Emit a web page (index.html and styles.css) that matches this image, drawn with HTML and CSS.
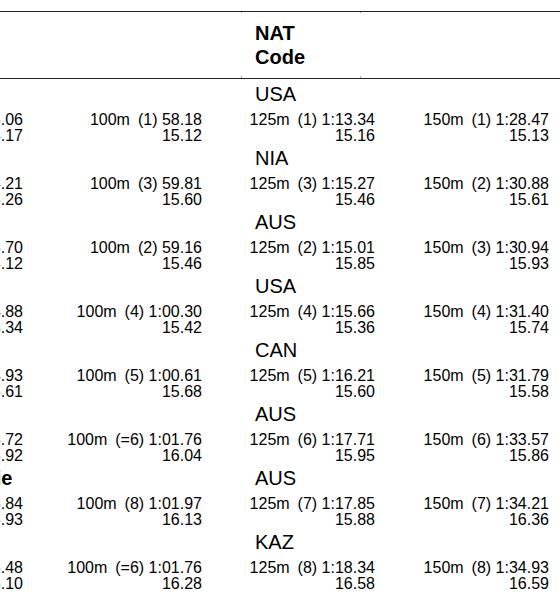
FILE: index.html
```html
<!DOCTYPE html>
<html lang="en">
<head>
<meta charset="utf-8">
<title>Splits</title>
<link rel="stylesheet" href="styles.css">
</head>
<body>
<div class="sheet">
  <div class="head">
    <div class="hcell hname">Name</div>
    <div class="hcell hnat">NAT<br>Code</div>
    <div class="hcell"></div>
  </div>

  <div class="group">
    <div class="crow"><div class="name">LEE Amy</div><div class="nat">USA</div></div>
    <div class="drow">
      <div class="cell"><div><span class="d">75m</span>(1) 43.06</div><div>15.17</div></div>
      <div class="cell"><div><span class="d">100m</span>(1) 58.18</div><div>15.12</div></div>
      <div class="cell"><div><span class="d">125m</span>(1) 1:13.34</div><div>15.16</div></div>
      <div class="cell"><div><span class="d">150m</span>(1) 1:28.47</div><div>15.13</div></div>
    </div>
  </div>

  <div class="group">
    <div class="crow"><div class="name">OBI Ada</div><div class="nat">NIA</div></div>
    <div class="drow">
      <div class="cell"><div><span class="d">75m</span>(3) 44.21</div><div>15.26</div></div>
      <div class="cell"><div><span class="d">100m</span>(3) 59.81</div><div>15.60</div></div>
      <div class="cell"><div><span class="d">125m</span>(3) 1:15.27</div><div>15.46</div></div>
      <div class="cell"><div><span class="d">150m</span>(2) 1:30.88</div><div>15.61</div></div>
    </div>
  </div>

  <div class="group">
    <div class="crow"><div class="name">KING Zoe</div><div class="nat">AUS</div></div>
    <div class="drow">
      <div class="cell"><div><span class="d">75m</span>(2) 43.70</div><div>15.12</div></div>
      <div class="cell"><div><span class="d">100m</span>(2) 59.16</div><div>15.46</div></div>
      <div class="cell"><div><span class="d">125m</span>(2) 1:15.01</div><div>15.85</div></div>
      <div class="cell"><div><span class="d">150m</span>(3) 1:30.94</div><div>15.93</div></div>
    </div>
  </div>

  <div class="group">
    <div class="crow"><div class="name">GRAY Ava</div><div class="nat">USA</div></div>
    <div class="drow">
      <div class="cell"><div><span class="d">75m</span>(4) 44.88</div><div>15.34</div></div>
      <div class="cell"><div><span class="d">100m</span>(4) 1:00.30</div><div>15.42</div></div>
      <div class="cell"><div><span class="d">125m</span>(4) 1:15.66</div><div>15.36</div></div>
      <div class="cell"><div><span class="d">150m</span>(4) 1:31.40</div><div>15.74</div></div>
    </div>
  </div>

  <div class="group">
    <div class="crow"><div class="name">ROY Mia</div><div class="nat">CAN</div></div>
    <div class="drow">
      <div class="cell"><div><span class="d">75m</span>(5) 44.93</div><div>15.61</div></div>
      <div class="cell"><div><span class="d">100m</span>(5) 1:00.61</div><div>15.68</div></div>
      <div class="cell"><div><span class="d">125m</span>(5) 1:16.21</div><div>15.60</div></div>
      <div class="cell"><div><span class="d">150m</span>(5) 1:31.79</div><div>15.58</div></div>
    </div>
  </div>

  <div class="group">
    <div class="crow"><div class="name">COX Isla</div><div class="nat">AUS</div></div>
    <div class="drow">
      <div class="cell"><div><span class="d">75m</span>(6) 45.72</div><div>15.92</div></div>
      <div class="cell"><div><span class="d">100m</span>(=6) 1:01.76</div><div>16.04</div></div>
      <div class="cell"><div><span class="d">125m</span>(6) 1:17.71</div><div>15.95</div></div>
      <div class="cell"><div><span class="d">150m</span>(6) 1:33.57</div><div>15.86</div></div>
    </div>
  </div>

  <div class="group">
    <div class="crow"><div class="name">WILSON Maddie</div><div class="nat">AUS</div></div>
    <div class="drow">
      <div class="cell"><div><span class="d">75m</span>(8) 45.84</div><div>15.93</div></div>
      <div class="cell"><div><span class="d">100m</span>(8) 1:01.97</div><div>16.13</div></div>
      <div class="cell"><div><span class="d">125m</span>(7) 1:17.85</div><div>15.88</div></div>
      <div class="cell"><div><span class="d">150m</span>(7) 1:34.21</div><div>16.36</div></div>
    </div>
  </div>

  <div class="group">
    <div class="crow"><div class="name">NUR Aya</div><div class="nat">KAZ</div></div>
    <div class="drow">
      <div class="cell"><div><span class="d">75m</span>(7) 45.48</div><div>16.10</div></div>
      <div class="cell"><div><span class="d">100m</span>(=6) 1:01.76</div><div>16.28</div></div>
      <div class="cell"><div><span class="d">125m</span>(8) 1:18.34</div><div>16.58</div></div>
      <div class="cell"><div><span class="d">150m</span>(8) 1:34.93</div><div>16.59</div></div>
    </div>
  </div>
</div>
</body>
</html>
```

FILE: styles.css
```css
html, body {
  margin: 0;
  padding: 0;
  background: #fff;
  overflow: hidden;
}
body {
  width: 560px;
  height: 598px;
  font-family: "Liberation Sans", Arial, sans-serif;
  color: #000;
}
.sheet {
  margin-left: -150px;
  width: 710px;
}
.head {
  margin-top: 11px;
  height: 66px;
  border-top: 1px solid #222;
  border-bottom: 1px solid #222;
  display: grid;
  grid-template-columns: 391px 120px 1fr;
}
.hcell {
  font-weight: bold;
  font-size: 20px;
  line-height: 24px;
  padding-top: 9px;
}
.hname {
  visibility: hidden;
}
.hnat {
  padding-left: 14px;
  background-image:
    linear-gradient(#aaa, #aaa),
    linear-gradient(#aaa, #aaa),
    linear-gradient(#aaa, #aaa),
    linear-gradient(#aaa, #aaa);
  background-size: 1px 1px, 1px 1px, 1px 2px, 1px 2px;
  background-position: left top, right top, left bottom, right bottom;
  background-repeat: no-repeat;
}
.group {
  height: 64px;
}
.head + .group {
  margin-top: 3px;
}
.crow {
  display: grid;
  grid-template-columns: 405px 1fr;
  height: 24px;
  font-size: 20px;
  line-height: 24px;
}
.name {
  font-weight: bold;
  padding-left: 8px;
  white-space: nowrap;
}
.drow {
  margin-top: 6px;
  display: grid;
  grid-template-columns: 173px 179px 173px 174px;
  font-size: 16px;
  line-height: 16px;
}
.cell {
  text-align: right;
  white-space: nowrap;
}
.d {
  margin-right: 8px;
}
```
